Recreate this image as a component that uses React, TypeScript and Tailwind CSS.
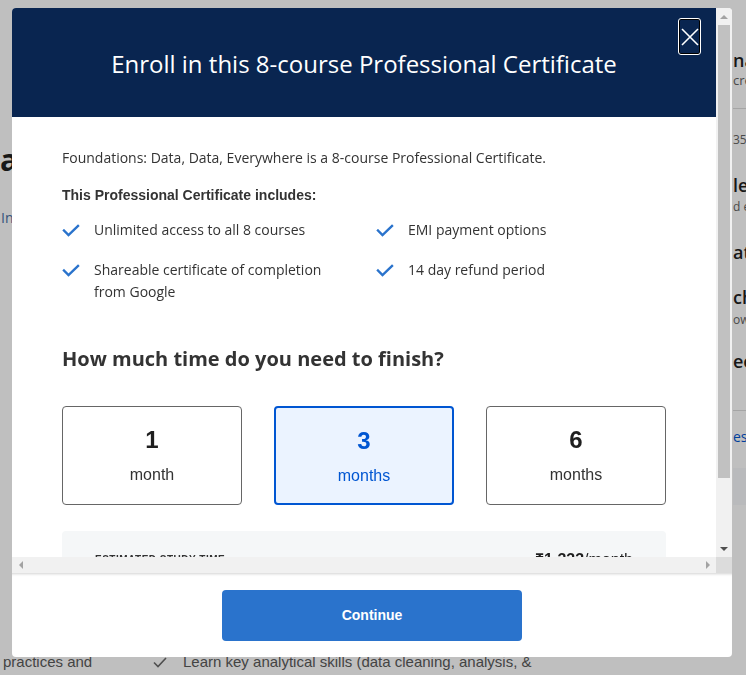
import React, { useState } from "react";

const OPEN = "font-['Open_Sans',sans-serif]";
const ARIAL = "font-['Liberation_Sans',Arial,sans-serif]";

function Check({ className }: { className?: string }) {
  return (
    <svg viewBox="0 0 18 18" fill="none" className={className}>
      <path d="M2 8.5l4.5 4.5L16 4" stroke="currentColor" strokeWidth="2.4" strokeLinecap="square" />
    </svg>
  );
}

// little scrollbar arrow triangles
function Arrow({ dir, color }: { dir: "up" | "down" | "left" | "right"; color: string }) {
  const pts = {
    up: "0,4 4,0 8,4",
    down: "0,0 8,0 4,4",
    left: "4,0 4,8 0,4",
    right: "0,0 4,4 0,8",
  }[dir];
  const vertical = dir === "up" || dir === "down";
  return (
    <svg viewBox={vertical ? "0 0 8 4" : "0 0 4 8"} className={vertical ? "h-[4px] w-[8px]" : "h-[8px] w-[4px]"}>
      <polygon points={pts} fill={color} />
    </svg>
  );
}

const perks = [
  "Unlimited access to all 8 courses",
  "EMI payment options",
  "Shareable certificate of completion from Google",
  "14 day refund period",
];

const plans = [
  { n: "1", label: "month" },
  { n: "3", label: "months" },
  { n: "6", label: "months" },
];

export default function App() {
  const [selected, setSelected] = useState(1);

  return (
    <div className={`h-[675px] w-full overflow-hidden bg-white ${OPEN}`}>
      {/* page behind the dialog */}
      <div className="flex h-[650px]">
        <div className="w-[12px] overflow-hidden whitespace-nowrap">
          <div className="mt-[142px] text-[30px] font-bold leading-[36px] text-[#1f1f1f]">a</div>
          <div className="mt-[30px] pl-px text-[14px] leading-[20px] text-[#4a6fa5]">Instructors</div>
        </div>
        <div className="w-[720px]" />
        <div className="w-[14px] overflow-hidden whitespace-nowrap pl-px">
          <div className="mt-[48px] text-[18px] font-semibold leading-[24px] text-[#1f1f1f]">nanodegree</div>
          <div className="text-[13px] leading-[16px] text-[#636363]">credential</div>
          <div className="mt-[20px] h-px bg-[#dcdcdc]" />
          <div className="mt-[23px] text-[12px] leading-[16px] text-[#636363]">350</div>
          <div className="mt-[25px] text-[18px] font-semibold leading-[24px] text-[#1f1f1f]">level</div>
          <div className="mt-[2px] text-[12px] leading-[16px] text-[#636363]">d e</div>
          <div className="mt-[25px] text-[18px] font-semibold leading-[24px] text-[#1f1f1f]">at</div>
          <div className="mt-[21px] text-[18px] font-semibold leading-[24px] text-[#1f1f1f]">ch</div>
          <div className="mt-[3px] text-[12px] leading-[16px] text-[#636363]">ow</div>
          <div className="mt-[21px] text-[18px] font-semibold leading-[24px] text-[#1f1f1f]">ee</div>
          <div className="mt-[37px] h-px bg-[#dcdcdc]" />
          <div className="mt-[16px] text-[14px] leading-[20px] text-[#0056d2]">es</div>
          <div className="mt-[21px] h-[37px] bg-[#f7f8fb]" />
        </div>
      </div>
      <div className={`flex items-center text-[15px] leading-[24px] text-[#5a5a5a] ${ARIAL}`}>
        <span className="ml-[3px] w-[149px]">practices and</span>
        <svg viewBox="0 0 16 16" className="h-[16px] w-[16px] text-[#6a6a6a]" fill="none">
          <path d="M2 8.5l4 4L14 4" stroke="currentColor" strokeWidth="1.6" />
        </svg>
        <span className="ml-[15px]">Learn key analytical skills (data cleaning, analysis, &amp;</span>
      </div>

      {/* overlay + dialog */}
      <div className="fixed inset-0 bg-black/25 pl-[12px] pt-[8px]">
        <div className="flex h-[649px] w-[720px] flex-col overflow-hidden rounded-[4px] bg-white">
          <div className="flex h-[565px] flex-col">
            <div className="flex h-[549px]">
              <div className="flex-1 overflow-hidden">
                <header className="relative flex h-[109px] items-center justify-center bg-[#092550] pt-[3px]">
                  <h2 className="text-[24px] leading-[32px] text-white">
                    Enroll in this 8-course Professional Certificate
                  </h2>
                  <button className="absolute right-[15px] top-[10px] flex h-[37px] w-[23px] items-center justify-center rounded-[3px] border border-white shadow-[inset_0_0_0_1px_#000]">
                    <svg viewBox="0 0 18 18" className="h-[18px] w-[18px]" fill="none">
                      <path d="M1 1l16 16M17 1L1 17" stroke="white" strokeWidth="1.6" />
                    </svg>
                  </button>
                </header>

                <div className="px-[50px] pb-[21px] pt-[30px] text-[#333]">
                  <p className="text-[14px] leading-[22px]">
                    Foundations: Data, Data, Everywhere is a 8-course Professional Certificate.
                  </p>
                  <p className={`mt-[16px] text-[14px] font-bold leading-[20px] ${ARIAL}`}>
                    This Professional Certificate includes:
                  </p>
                  <ul className="mt-[14px] grid grid-cols-[314px_1fr] gap-y-[18px]">
                    {perks.map((p) => (
                      <li key={p} className="flex items-start gap-[14px]">
                        <Check className="mt-[3px] h-[18px] w-[18px] shrink-0 text-[#2a73cc]" />
                        <span className="max-w-[240px] text-[14px] leading-[22px]">{p}</span>
                      </li>
                    ))}
                  </ul>

                  <h3 className="mt-[42px] text-[20px] font-bold leading-[28px]">
                    How much time do you need to finish?
                  </h3>

                  <div className={`mt-[33px] grid grid-cols-3 gap-8 ${ARIAL}`}>
                    {plans.map((p, i) => {
                      const on = i === selected;
                      return (
                        <button
                          key={p.n}
                          onClick={() => setSelected(i)}
                          className={
                            on
                              ? "flex h-[99px] flex-col items-center rounded-[4px] border-2 border-[#0056d2] bg-[#ebf3ff] text-[#0056d2]"
                              : "flex h-[99px] flex-col items-center rounded-[4px] border border-[#666] bg-white text-[#1f1f1f]"
                          }
                        >
                          <span className="mt-[19px] text-[24px] font-bold leading-[28px]">{p.n}</span>
                          <span className={`mt-[11px] text-[16px] leading-[20px] ${on ? "" : "text-[#333]"}`}>
                            {p.label}
                          </span>
                        </button>
                      );
                    })}
                  </div>

                  <div className="mt-[26px] flex h-[80px] items-start justify-between rounded-[4px] bg-[#f5f7f8] px-[33px] pt-[19px]">
                    <span className={`mt-[3px] text-[10px] font-bold uppercase leading-[14px] tracking-[0.5px] text-[#333] ${ARIAL}`}>
                      Estimated study time
                    </span>
                    <span className={`text-[16px] leading-[20px] text-[#1f1f1f] ${ARIAL}`}>
                      <b>₹1,333</b>/month
                    </span>
                  </div>
                </div>
              </div>

              {/* vertical scrollbar */}
              <div className="flex w-[16px] flex-col bg-[#f1f1f1]">
                <div className="flex h-[17px] items-center justify-center">
                  <Arrow dir="up" color="#a3a3a3" />
                </div>
                <div className="mx-[2px] h-[453px] bg-[#c1c1c1]" />
                <div className="flex-1" />
                <div className="flex h-[17px] items-center justify-center">
                  <Arrow dir="down" color="#505050" />
                </div>
              </div>
            </div>

            {/* horizontal scrollbar */}
            <div className="flex h-[16px] bg-[#f1f1f1]">
              <div className="flex w-[17px] items-center justify-center">
                <Arrow dir="left" color="#a3a3a3" />
              </div>
              <div className="flex-1" />
              <div className="flex w-[17px] items-center justify-center">
                <Arrow dir="right" color="#a3a3a3" />
              </div>
              <div className="w-[16px] bg-[#dcdcdc]" />
            </div>
          </div>

          <div className="flex flex-1 items-center justify-center shadow-[inset_0_3px_3px_-2px_rgba(0,0,0,0.18)]">
            <button className={`h-[51px] w-[300px] rounded-[4px] bg-[#2a73cc] text-[14px] font-bold text-white ${ARIAL}`}>
              Continue
            </button>
          </div>
        </div>
      </div>
    </div>
  );
}
